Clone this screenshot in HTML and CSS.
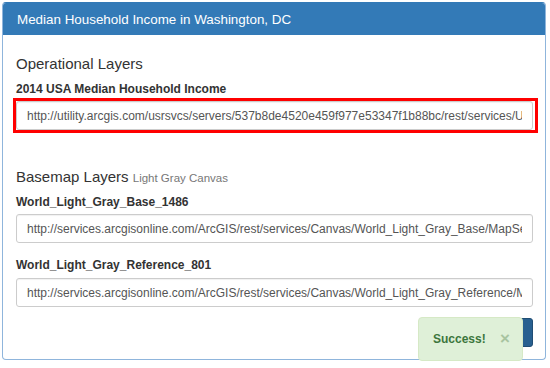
FILE: index.html
```html
<!DOCTYPE html>
<html lang="en">
<head>
  <meta charset="UTF-8" />
  <title>Median Household Income in Washington, DC</title>
  <link rel="stylesheet" href="styles.css">
</head>
<body>

  <div class="panel">
    <div class="panel-heading">Median Household Income in Washington, DC</div>
    <div class="panel-body">
      <h4 class="section first">Operational Layers</h4>
      <label class="layer-label first-label">2014 USA Median Household Income</label>
      <div class="highlight">
        <input class="url" type="text" value="http://utility.arcgis.com/usrsvcs/servers/537b8de4520e459f977e53347f1b88bc/rest/services/USA_Median_Household_Income/MapServer">
      </div>

      <h4 class="section basemap">Basemap Layers <small>Light Gray Canvas</small></h4>
      <label class="layer-label">World_Light_Gray_Base_1486</label>
      <input class="url" type="text" value="http://services.arcgisonline.com/ArcGIS/rest/services/Canvas/World_Light_Gray_Base/MapServer">
      <label class="layer-label second">World_Light_Gray_Reference_801</label>
      <input class="url" type="text" value="http://services.arcgisonline.com/ArcGIS/rest/services/Canvas/World_Light_Gray_Reference/MapServer">

      <div class="actions">
        <button class="btn-save" aria-label="Save"></button>
      </div>
    </div>
  </div>

  <div class="toast">
    <span>Success!</span>
    <span class="close">&times;</span>
  </div>

</body>
</html>
```

FILE: styles.css
```css
body {
  margin: 0;
  padding: 2px 4px 0 2px;
  font-family: "Liberation Sans", Arial, sans-serif;
  color: #333;
  background: #fff;
}
.panel {
  border: 1px solid #8fb5dc;
  border-top-color: #337ab7;
  border-radius: 4px;
  overflow: hidden;
}
.panel-heading {
  background: #337ab7;
  color: #fff;
  font-size: 13.4px;
  height: 32px;
  line-height: 33px;
  padding: 0 14px;
}
.panel-body {
  padding: 20px 12px 12px 13px;
}
.section {
  margin: 0;
  font-size: 15px;
  font-weight: normal;
  line-height: 18px;
}
.section small {
  font-size: 11.5px;
  color: #777;
}
.basemap {
  margin-top: 35px;
}
.layer-label {
  display: block;
  font-size: 12px;
  font-weight: bold;
  line-height: 16px;
  margin: 7px 0 4px;
}
.first-label {
  margin: 8px 0 1px;
}
.layer-label.second {
  margin: 14px 0 5px;
}
.highlight {
  border: 3px solid #f00;
  margin: 0 -5px 0 -3px;
  padding: 0 2px 0 0;
}
.url {
  display: block;
  box-sizing: border-box;
  width: 100%;
  height: 29px;
  padding: 0 10px;
  border: 1px solid #ccc;
  border-radius: 3px;
  font-family: "Liberation Sans", Arial, sans-serif;
  font-size: 12px;
  color: #555;
  background: #fff;
  box-shadow: inset 0 1px 1px rgba(0,0,0,.06);
}
.actions {
  display: flex;
  justify-content: flex-end;
  margin-top: 11px;
}
.btn-save {
  width: 60px;
  height: 29px;
  border: 1px solid #204d74;
  border-radius: 3px;
  background: #286090;
}
.toast {
  position: absolute;
  left: 418px;
  top: 317px;
  width: 105px;
  height: 44px;
  box-sizing: border-box;
  display: flex;
  align-items: center;
  justify-content: space-between;
  padding: 0 12px 0 14px;
  background: #dff0d8;
  border: 1px solid #d6e9c6;
  border-radius: 4px;
  color: #3c763d;
  font-size: 12px;
  font-weight: bold;
}
.toast .close {
  color: #a8c4a0;
  font-size: 17px;
  font-weight: bold;
}
```
